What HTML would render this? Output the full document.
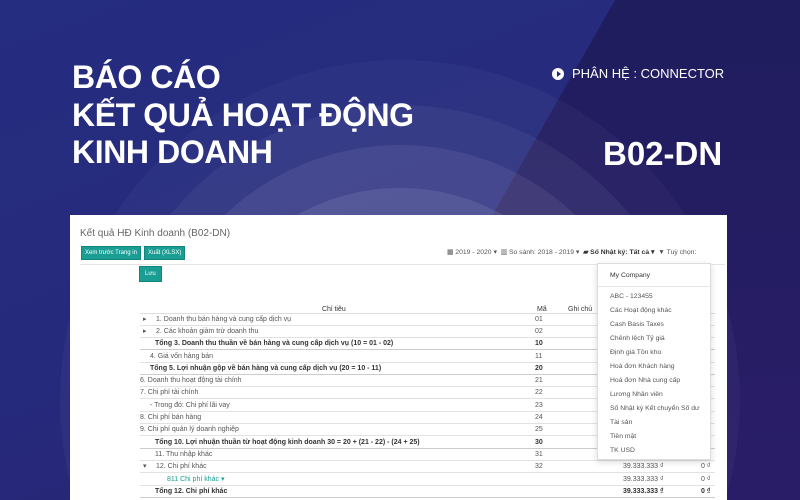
<!DOCTYPE html>
<html><head><meta charset="utf-8"><style>
*{margin:0;padding:0;box-sizing:border-box}
html,body{width:800px;height:500px;overflow:hidden}
body{position:relative;font-family:"Liberation Sans",sans-serif;background:#25297a}
.bg{position:absolute;inset:0;background:linear-gradient(160deg,#252d80 0%,#262a7c 50%,#2a2170 100%)}
.dark{position:absolute;inset:0;background:linear-gradient(180deg,#1f1d5e,#2a1d68);clip-path:polygon(615px 0,800px 0,800px 500px,330px 500px)}
.arcs{position:absolute;left:0;top:0;width:800px;height:500px;overflow:hidden}
.arc{position:absolute;border-radius:50%;left:50%;transform:translateX(-50%)}
.title{position:absolute;left:72px;top:59px;color:#fff;font-weight:bold;font-size:32px;line-height:37.5px;letter-spacing:-0.4px}
.ph{position:absolute;left:552px;top:66px;color:#fff;font-size:13px;display:flex;align-items:center;gap:8px}
.ph i{width:12px;height:12px;border-radius:50%;background:#fff;position:relative}
.ph i:after{content:"";position:absolute;left:4.5px;top:3px;border-left:4px solid #25297a;border-top:3px solid transparent;border-bottom:3px solid transparent}
.b02{position:absolute;left:603px;top:135px;color:#fff;font-weight:bold;font-size:33px}
.card{position:absolute;left:70px;top:215px;width:657px;height:285px;background:#fff;font-size:7px;color:#555;overflow:hidden}
.btn{position:absolute;background:#1a9e94;color:#fff;font-size:6px;padding:3px 3px;border:1px solid #12857c}
.row{position:absolute;left:70px;width:575px;height:12.3px;border-bottom:1px solid #e2e2e2;line-height:12px;white-space:nowrap}
.row.b{font-weight:bold;color:#333;border-bottom:1px solid #ccc}
.row span{position:absolute}
.dd{position:absolute;left:527px;top:48px;width:114px;height:197px;background:#fff;border:1px solid #ddd;box-shadow:0 2px 6px rgba(0,0,0,.15);font-size:6.8px;color:#555}
.dd div{position:absolute;left:12px}
</style></head><body>
<div class="bg"></div>
<div class="dark"></div>
<div class="arcs">
<div class="arc" style="top:60px;width:680px;height:680px;background:rgba(255,255,255,0.035)"></div>
<div class="arc" style="top:105px;width:590px;height:590px;background:rgba(255,255,255,0.05)"></div>
<div class="arc" style="top:145px;width:510px;height:510px;background:rgba(255,255,255,0.07)"></div>
<div class="arc" style="top:188px;width:420px;height:420px;background:rgba(255,255,255,0.09)"></div>
</div>
<div class="title">BÁO CÁO<br>KẾT QUẢ HOẠT ĐỘNG<br>KINH DOANH</div>
<div class="ph"><i></i>PHÂN HỆ : CONNECTOR</div>
<div class="b02">B02-DN</div>
<div class="card">
<div style="position:absolute;left:10px;top:13px;font-size:10px;color:#666">Kết quả HĐ Kinh doanh (B02-DN)</div>
<div class="btn" style="left:11px;top:31px">Xem trước Trang in</div>
<div class="btn" style="left:74px;top:31px">Xuất (XLSX)</div>
<div style="position:absolute;left:10px;top:49px;width:645px;border-top:1.5px solid #e5e5e5"></div>
<div class="btn" style="left:69px;top:51px;padding:4px 5px">Lưu</div>
<div style="position:absolute;left:377px;top:33px;font-size:6.8px;color:#555;white-space:nowrap">▦ 2019 - 2020 ▾ &nbsp;<span>▥ So sánh: 2018 - 2019 ▾</span> &nbsp;<b style="color:#333">▰ Số Nhật ký: Tất cả ▾</b> &nbsp;▼ Tuỳ chọn:</div>
<div style="position:absolute;left:252px;top:91px;color:#333">Chỉ tiêu</div>
<div style="position:absolute;left:467px;top:91px;color:#333">Mã</div>
<div style="position:absolute;left:498px;top:91px;color:#333">Ghi chú</div>
<div style="position:absolute;left:70px;top:98px;width:575px;border-bottom:1px solid #ddd"></div>
<div class="row" style="top:99px"><span style="left:3px">▸</span><span style="left:16px">1. Doanh thu bán hàng và cung cấp dịch vụ</span><span style="left:395px">01</span></div>
<div class="row" style="top:111px"><span style="left:3px">▸</span><span style="left:16px">2. Các khoản giảm trừ doanh thu</span><span style="left:395px">02</span></div>
<div class="row b" style="top:123px"><span style="left:15px">Tổng 3. Doanh thu thuần về bán hàng và cung cấp dịch vụ (10 = 01 - 02)</span><span style="left:395px">10</span></div>
<div class="row" style="top:136px"><span style="left:10px">4. Giá vốn hàng bán</span><span style="left:395px">11</span></div>
<div class="row b" style="top:148px"><span style="left:10px">Tổng 5. Lợi nhuận gộp về bán hàng và cung cấp dịch vụ (20 = 10 - 11)</span><span style="left:395px">20</span></div>
<div class="row" style="top:160px"><span style="left:0">6. Doanh thu hoạt động tài chính</span><span style="left:395px">21</span></div>
<div class="row" style="top:172px"><span style="left:0">7. Chi phí tài chính</span><span style="left:395px">22</span></div>
<div class="row" style="top:185px"><span style="left:10px">- Trong đó: Chi phí lãi vay</span><span style="left:395px">23</span></div>
<div class="row" style="top:197px"><span style="left:0">8. Chi phí bán hàng</span><span style="left:395px">24</span></div>
<div class="row" style="top:209px"><span style="left:0">9. Chi phí quản lý doanh nghiệp</span><span style="left:395px">25</span></div>
<div class="row b" style="top:222px"><span style="left:15px">Tổng 10. Lợi nhuận thuần từ hoạt động kinh doanh 30 = 20 + (21 - 22) - (24 + 25)</span><span style="left:395px">30</span></div>
<div class="row" style="top:234px"><span style="left:15px">11. Thu nhập khác</span><span style="left:395px">31</span></div>
<div class="row" style="top:246px"><span style="left:3px">▾</span><span style="left:16px">12. Chi phí khác</span><span style="left:395px">32</span><span style="left:483px">39.333.333 ₫</span><span style="left:561px">0 ₫</span></div>
<div class="row" style="top:259px"><span style="left:27px;color:#1a9e94">811 Chi phí khác ▾</span><span style="left:483px">39.333.333 ₫</span><span style="left:561px">0 ₫</span></div>
<div class="row b" style="top:271px;height:12px"><span style="left:15px">Tổng 12. Chi phí khác</span><span style="left:483px">39.333.333 ₫</span><span style="left:561px">0 ₫</span></div>
<div class="dd">
<div style="top:8px;color:#333">My Company</div>
<div style="left:0;top:22px;width:112px;border-top:1px solid #e5e5e5"></div>
<div style="top:29px">ABC - 123455</div>
<div style="top:43px">Các Hoạt động khác</div>
<div style="top:57px">Cash Basis Taxes</div>
<div style="top:71px">Chênh lệch Tỷ giá</div>
<div style="top:85px">Định giá Tồn kho</div>
<div style="top:99px">Hoá đơn Khách hàng</div>
<div style="top:113px">Hoá đơn Nhà cung cấp</div>
<div style="top:127px">Lương Nhân viên</div>
<div style="top:141px">Số Nhật ký Kết chuyển Số dư</div>
<div style="top:155px">Tài sản</div>
<div style="top:169px">Tiền mặt</div>
<div style="top:183px">TK USD</div>
</div>
</div>
</body></html>
